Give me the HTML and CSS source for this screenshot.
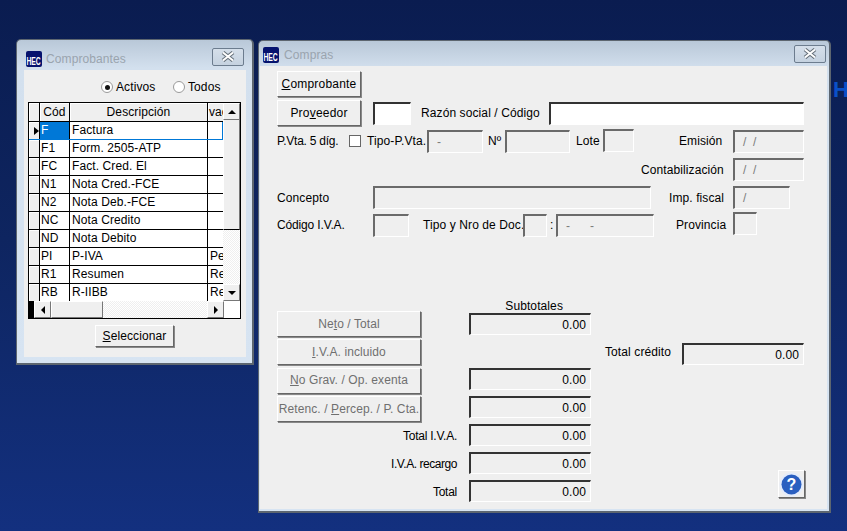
FILE: index.html
```html
<!DOCTYPE html>
<html lang="es">
<head>
<meta charset="utf-8">
<title>Compras</title>
<link rel="stylesheet" href="styles.css">
</head>
<body>
<div class="desk-h">H</div>

<section class="win win-comp">
  <header class="titlebar">
    <span class="logo"><span class="logo-t">HEC</span></span>
    <span class="title">Comprobantes</span>
    <span class="close"><svg width="18" height="11" viewBox="0 0 18 11"><path d="M4 1.5 L14 9.5 M14 1.5 L4 9.5" stroke="#66707a" stroke-width="4" fill="none"/><path d="M4 1.5 L14 9.5 M14 1.5 L4 9.5" stroke="#fff" stroke-width="2" fill="none"/></svg></span>
  </header>
  <div class="client comp-client">
    <div class="radios">
      <span class="radio on"></span><span class="radio-l">Activos</span>
      <span class="radio"></span><span class="radio-l">Todos</span>
    </div>
    <div class="grid-box">
      <div class="grid-main">
        <div class="grid-rows">
          <div class="g-row g-head"><span class="ind"></span><span class="c1 hd">Cód</span><span class="c2 hd">Descripción</span><span class="c3 hd cut">vac</span></div>
          <div class="g-row g-sel"><span class="ind"><i class="ptr"></i></span><span class="c1 sel">F</span><span class="c2">Factura</span><span class="c3"></span></div>
          <div class="g-row"><span class="ind"></span><span class="c1">F1</span><span class="c2">Form. 2505-ATP</span><span class="c3"></span></div>
          <div class="g-row"><span class="ind"></span><span class="c1">FC</span><span class="c2">Fact. Cred. El</span><span class="c3"></span></div>
          <div class="g-row"><span class="ind"></span><span class="c1">N1</span><span class="c2">Nota Cred.-FCE</span><span class="c3"></span></div>
          <div class="g-row"><span class="ind"></span><span class="c1">N2</span><span class="c2">Nota Deb.-FCE</span><span class="c3"></span></div>
          <div class="g-row"><span class="ind"></span><span class="c1">NC</span><span class="c2">Nota Credito</span><span class="c3"></span></div>
          <div class="g-row"><span class="ind"></span><span class="c1">ND</span><span class="c2">Nota Debito</span><span class="c3"></span></div>
          <div class="g-row"><span class="ind"></span><span class="c1">PI</span><span class="c2">P-IVA</span><span class="c3">Pe</span></div>
          <div class="g-row"><span class="ind"></span><span class="c1">R1</span><span class="c2">Resumen</span><span class="c3">Re</span></div>
          <div class="g-row g-last"><span class="ind"></span><span class="c1">RB</span><span class="c2">R-IIBB</span><span class="c3">Re</span></div>
        </div>
        <div class="vbar">
          <span class="sb-btn"><i class="tri up"></i></span>
          <span class="v-thumb"></span>
          <span class="v-track"></span>
          <span class="sb-btn"><i class="tri down"></i></span>
        </div>
      </div>
      <div class="hbar">
        <span class="h-black"></span>
        <span class="sb-btn h"><i class="tri left"></i></span>
        <span class="h-thumb"></span>
        <span class="h-track"></span>
        <span class="sb-btn h"><i class="tri right"></i></span>
        <span class="h-corner"></span>
      </div>
    </div>
    <div class="sel-wrap"><span class="btn btn-sel"><span><u>S</u>eleccionar</span></span></div>
  </div>
</section>

<section class="win win-main">
  <header class="titlebar">
    <span class="logo"><span class="logo-t">HEC</span></span>
    <span class="title">Compras</span>
    <span class="close"><svg width="18" height="11" viewBox="0 0 18 11"><path d="M4 1.5 L14 9.5 M14 1.5 L4 9.5" stroke="#66707a" stroke-width="4" fill="none"/><path d="M4 1.5 L14 9.5 M14 1.5 L4 9.5" stroke="#fff" stroke-width="2" fill="none"/></svg></span>
  </header>
  <div class="client main-client">
    <div class="row r-comp"><span class="btn btn-top"><span><u>C</u>omprobante</span></span></div>
    <div class="row r-prov">
      <span class="btn btn-top"><span>Pro<u>v</u>eedor</span></span>
      <span class="fld white f-prov"></span>
      <span class="lbl l-razon">Razón social / Código</span>
      <span class="fld white f-razon"></span>
    </div>
    <div class="row r-pvta">
      <span class="lbl l-pvta tight">P.Vta. 5 díg.</span>
      <span class="check"></span>
      <span class="lbl l-tipo">Tipo-P.Vta.</span>
      <span class="fld f-tipo">-</span>
      <span class="lbl l-nro">Nº</span>
      <span class="fld f-nro"></span>
      <span class="lbl l-lote">Lote</span>
      <span class="fld f-lote"></span>
      <span class="lbl l-emi">Emisión</span>
      <span class="fld f-date">/ &nbsp;/</span>
    </div>
    <div class="row r-cont">
      <span class="lbl l-cont">Contabilización</span>
      <span class="fld f-date">/ &nbsp;/</span>
    </div>
    <div class="row r-conc">
      <span class="lbl l-left">Concepto</span>
      <span class="fld f-conc"></span>
      <span class="lbl l-imp">Imp. fiscal</span>
      <span class="fld f-imp">/</span>
    </div>
    <div class="row r-iva">
      <span class="lbl l-left tight-s">Código I.V.A.</span>
      <span class="fld f-iva"></span>
      <span class="lbl l-doc">Tipo y Nro de Doc.</span>
      <span class="fld f-doc1"></span>
      <span class="lbl l-colon">:</span>
      <span class="fld f-doc2">- &nbsp; &nbsp; &nbsp;-</span>
      <span class="lbl l-prov">Provincia</span>
      <span class="fld f-provn"></span>
    </div>

    <div class="totals">
      <div class="tot-btns">
        <span class="btn btn-off"><span>Ne<u>t</u>o / Total</span></span>
        <span class="btn btn-off"><span><u>I</u>.V.A. incluido</span></span>
        <span class="btn btn-off btn-gap"><span><u>N</u>o Grav. / Op. exenta</span></span>
        <span class="btn btn-off"><span>Retenc. / <u>P</u>ercep. / P. Cta.</span></span>
      </div>
      <div class="tot-vals">
        <div class="sub-h">Subtotales</div>
        <div class="tv"><span class="fld num">0.00</span></div>
        <div class="tv tv-empty"></div>
        <div class="tv"><span class="fld num">0.00</span></div>
        <div class="tv"><span class="fld num">0.00</span></div>
        <div class="tv"><span class="lbl tl">Total I.V.A.</span><span class="fld num">0.00</span></div>
        <div class="tv"><span class="lbl tl tl-long">I.V.A. recargo</span><span class="fld num">0.00</span></div>
        <div class="tv"><span class="lbl tl">Total</span><span class="fld num">0.00</span></div>
      </div>
      <div class="tot-right">
        <div class="credit"><span class="lbl l-cred">Total crédito</span><span class="fld num">0.00</span></div>
        <span class="btn btn-help"><svg width="25" height="25" viewBox="0 0 25 25"><circle cx="12.5" cy="12.5" r="12" fill="#e4ecfb"/><circle cx="12.5" cy="12.5" r="10" fill="#2a5fc0"/><text x="12.5" y="18" text-anchor="middle" class="q">?</text></svg></span>
      </div>
    </div>
  </div>
</section>
</body>
</html>
```
FILE: styles.css
```css
* { box-sizing: border-box; }
html, body { margin: 0; height: 100%; }
body {
  width: 847px; height: 531px; overflow: hidden; position: relative;
  background: linear-gradient(180deg, #0a1c50 0%, #0e2560 45%, #13307f 100%);
  font: 12px "Liberation Sans", Arial, sans-serif; color: #000;
  font-kerning: normal; text-rendering: optimizeLegibility;
}
.desk-h { position: absolute; left: 833px; top: 77px; font-size: 22px; font-weight: 700; color: #0a50c8; }

.win {
  position: absolute; display: flex; flex-direction: column;
  background: linear-gradient(180deg, #b9c8d8 0, #d3e0ee 28px, #d7e4f2 100%);
  border: 1px solid #5d6670; border-right-width: 2px; border-bottom-width: 2px;
  border-radius: 5px 5px 0 0;
}
.win-comp { left: 16px; top: 39px; width: 238px; height: 326px; }
.win-main { left: 258px; top: 40px; width: 573px; height: 473px; }

.titlebar { display: flex; align-items: center; flex: none; }
.win-comp .titlebar { height: 30px; padding: 7px 8px 0 9px; }
.win-main .titlebar { height: 25px; padding: 3px 3px 0 4px; }
.logo {
  width: 16px; height: 16px; background: #06136e; border-radius: 2px; flex: none;
  display: flex; align-items: flex-end; justify-content: center; overflow: hidden;
}
.logo-t { color: #fff; font-size: 10px; font-weight: 700; transform: scaleX(.68); line-height: 11px; flex: none; }
.title { margin-left: 4px; color: #9aa4ae; font-size: 12px; flex: 1; letter-spacing: .1px; }
.win-main .title { margin-left: 5px; }
.close {
  width: 32px; height: 18px; border: 1px solid #6c7c8e; border-radius: 2px;
  background: linear-gradient(180deg, #d5dfea, #c5d2e0);
  display: flex; align-items: center; justify-content: center;
}
.win-comp .close { margin-top: -4px; }
.win-main .close { margin-top: -3px; }

.client { background: #efefef; flex: 1; min-height: 0; margin: 0 6px 6px 7px; }
.main-client { margin: 0 2px 2px 1px; padding: 4px 0 0 17px; position: relative; }
.comp-client { padding: 0 4px; }

.radios { height: 32px; display: flex; align-items: center; padding: 2px 0 0 73px; }
.radio {
  width: 12px; height: 12px; border-radius: 50%; background: #fff;
  border: 1px solid #9a9a9a; flex: none; position: relative;
}
.radio.on::after {
  content: ""; position: absolute; left: 2.5px; top: 2.5px; width: 5px; height: 5px;
  border-radius: 50%; background: #111;
}
.radio-l { margin-left: 3px; width: 57px; flex: none; letter-spacing: .1px; }

.grid-box { width: 213px; height: 217px; border: 1px solid #000; background: #fff; display: flex; flex-direction: column; }
.grid-main { display: flex; height: 198px; overflow: hidden; flex: none; }
.grid-rows { width: 194px; flex: none; overflow: hidden; }
.g-row { display: flex; height: 18px; border-bottom: 1px solid #000; }
.g-row span { line-height: 17px; white-space: nowrap; overflow: hidden; border-right: 1px solid #000; letter-spacing: .1px; }
.g-row span:last-child { border-right: 0; }
.g-head { height: 19px; }
.g-row .hd { line-height: 19px; }
.g-last { border-bottom: 0; }
.ind { width: 11px; flex: none; background: #efefef; position: relative; box-shadow: inset 1px 1px 0 #fff; }
.c1 { width: 30px; flex: none; padding-left: 1px; }
.c2 { width: 138px; flex: none; padding-left: 2px; }
.c3 { width: 15px; flex: none; padding-left: 2px; }
.hd { background: #efefef; text-align: center; padding: 0; box-shadow: inset 1px 1px 0 #fff; }
.cut { text-align: left; padding-left: 1px; }
.sel { background: #0078d7; color: #fff; }
.g-sel { border-bottom-color: #0078d7; }
.g-sel .c3.c3 { border-right: 1px solid #0078d7; }
.ptr { position: absolute; left: 5px; top: 5px; border-left: 5px solid #000; border-top: 4px solid transparent; border-bottom: 4px solid transparent; }

.vbar { width: 17px; flex: 1; display: flex; flex-direction: column; background: #f4f4f4; }
.sb-btn {
  width: 17px; height: 17px; flex: none; background: #efefef;
  border: 1px solid; border-color: #fff #777 #777 #fff;
  display: flex; align-items: center; justify-content: center;
}
.tri { width: 0; height: 0; border: 4px solid transparent; }
.tri.up { border-bottom: 4px solid #000; border-top: 0; }
.tri.down { border-top: 4px solid #000; border-bottom: 0; }
.tri.left { border-right: 4px solid #000; border-left: 0; }
.tri.right { border-left: 4px solid #000; border-right: 0; }
.v-thumb { height: 110px; flex: none; background: #efefef; border-left: 1px solid #fff; border-bottom: 1px solid #000; border-right: 1px solid #777; }
.v-track { flex: 1; background: repeating-conic-gradient(#efefef 0 25%, #fff 0 50%) 0 0 / 2px 2px; }
.hbar { height: 17px; display: flex; background: #fff; }
.h-black { width: 5px; background: #000; flex: none; }
.h-thumb { width: 52px; flex: none; background: #efefef; border: 1px solid; border-color: #fff #777 #777 #fff; }
.h-track { width: 104px; flex: none; background: repeating-conic-gradient(#efefef 0 25%, #fff 0 50%) 0 0 / 2px 2px; }
.sb-btn.h:last-of-type { width: 16px; }
.h-corner { flex: 1; background: #fff; }

.sel-wrap { display: flex; justify-content: center; padding: 6px 1px 0 0; }
.btn {
  display: flex; align-items: center; justify-content: center; background: #efefef; flex: none;
  border: 1px solid; border-color: #fff #666 #666 #fff; box-shadow: 1px 1px 0 #888;
  letter-spacing: .1px; white-space: nowrap;
}
.btn-sel { width: 79px; height: 22px; }
.btn-top { width: 84px; height: 26px; letter-spacing: .2px; }
.btn-off { width: 144px; height: 26px; color: #6f6f6f; }
.btn-gap { margin-top: 1px; padding-bottom: 2px; }
.btn-help { position: absolute; right: 22px; bottom: 11px; width: 27px; height: 28px; }
.q { font: 700 16px "Liberation Sans", Arial, sans-serif; fill: #fff; }

.row { display: flex; align-items: center; }
.r-comp { height: 27px; }
.r-prov { height: 28px; margin-top: 2px; }
.r-pvta { height: 28px; }
.r-cont { height: 29px; }
.r-conc { height: 27px; }
.r-iva { height: 28px; }
.lbl { white-space: nowrap; letter-spacing: .1px; flex: none; }
.lbl.tight { letter-spacing: -.25px; }
.lbl.tight-s { letter-spacing: -.15px; }

.fld {
  display: flex; align-items: center; height: 23px; flex: none; background: #efefef;
  border: 1px solid; border-color: #6a6a6a #fff #fff #6a6a6a; border-top-width: 2px; border-left-width: 2px;
  padding-left: 8px; color: #7c7c7c;
}
.white { background: #fff; border-top-color: #333; border-left-color: #333; }
.f-prov { width: 38px; margin-left: 12px; }
.l-razon { margin-left: 10px; width: 128px; }
.f-razon { width: 255px; }
.l-pvta { width: 72px; }
.check { width: 12px; height: 12px; background: #fff; border: 1px solid #666; flex: none; }
.l-tipo { margin-left: 6px; width: 60px; }
.f-tipo { width: 56px; }
.l-nro { margin-left: 5px; width: 17px; }
.f-nro { width: 65px; }
.l-lote { margin-left: 6px; width: 27px; }
.f-lote { width: 31px; margin-top: -2px; }
.l-emi { margin-left: 45px; width: 54px; }
.f-date { width: 71px; }
.l-cont { margin-left: 364px; width: 92px; }
.l-left { width: 96px; }
.f-conc { width: 278px; }
.l-imp { margin-left: 18px; width: 64px; }
.f-imp { width: 57px; }
.f-iva { width: 36px; }
.l-doc { margin-left: 14px; width: 100px; }
.f-doc1 { width: 24px; }
.l-colon { margin-left: 3px; width: 6px; }
.f-doc2 { width: 98px; }
.l-prov { margin-left: 22px; width: 57px; }
.f-provn { width: 24px; margin-top: -4px; }

.totals { display: flex; margin-top: 59px; }
.tot-btns { display: flex; flex-direction: column; gap: 2px; width: 144px; padding-top: 13px; flex: none; }
.tot-vals { width: 170px; flex: none; display: flex; flex-direction: column; align-items: stretch; }
.sub-h { text-align: right; padding: 1px 28px 0 0; height: 12px; line-height: 14px; letter-spacing: .1px; }
.tv { display: flex; justify-content: flex-end; align-items: center; height: 28px; flex: none; }
.tv-empty { height: 27px; }
.tv .tl { margin-right: 12px; padding-top: 2px; letter-spacing: -.25px; }
.tv .tl-long { letter-spacing: -.45px; }
.num {
  width: 122px; height: 22px; justify-content: flex-end; padding: 0 4px 0 0; color: #000;
  letter-spacing: .1px; border-top-color: #333; border-left-color: #333;
}
.tot-right { flex: none; }
.credit { display: flex; align-items: center; margin: 45px 0 0 14px; }
.l-cred { width: 77px; margin-bottom: 4px; }
```
